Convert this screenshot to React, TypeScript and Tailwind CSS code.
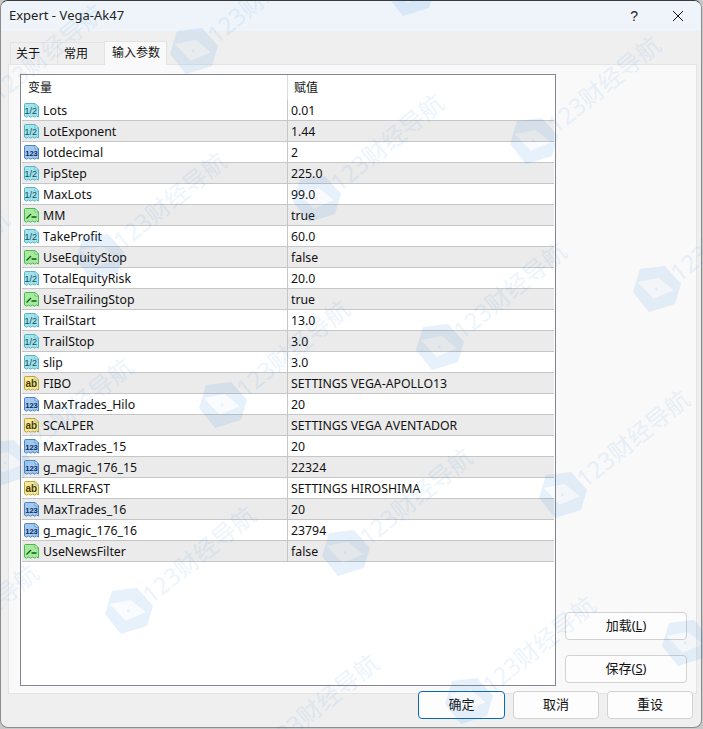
const rows: [string, string, string][] = [
  ['f', 'Lots', '0.01'],
  ['f', 'LotExponent', '1.44'],
  ['i', 'lotdecimal', '2'],
  ['f', 'PipStep', '225.0'],
  ['f', 'MaxLots', '99.0'],
  ['b', 'MM', 'true'],
  ['f', 'TakeProfit', '60.0'],
  ['b', 'UseEquityStop', 'false'],
  ['f', 'TotalEquityRisk', '20.0'],
  ['b', 'UseTrailingStop', 'true'],
  ['f', 'TrailStart', '13.0'],
  ['f', 'TrailStop', '3.0'],
  ['f', 'slip', '3.0'],
  ['s', 'FIBO', 'SETTINGS VEGA-APOLLO13'],
  ['i', 'MaxTrades_Hilo', '20'],
  ['s', 'SCALPER', 'SETTINGS VEGA AVENTADOR'],
  ['i', 'MaxTrades_15', '20'],
  ['i', 'g_magic_176_15', '22324'],
  ['s', 'KILLERFAST', 'SETTINGS HIROSHIMA'],
  ['i', 'MaxTrades_16', '20'],
  ['i', 'g_magic_176_16', '23794'],
  ['b', 'UseNewsFilter', 'false'],
];

const iconStyles: Record<string, { fill: string; stroke: string; ink: string }> = {
  f: { fill: '#a2e3ec', stroke: '#55b6c8', ink: '#0f4a5a' },
  i: { fill: '#a3c8f0', stroke: '#4a86c6', ink: '#0b2a5c' },
  b: { fill: '#a6ea9c', stroke: '#4fb658', ink: '#0f5a1c' },
  s: { fill: '#f5ea9c', stroke: '#bda640', ink: '#463a05' },
};

function TypeIcon({ kind }: { kind: string }) {
  const c = iconStyles[kind];
  return (
    <svg width="17" height="17" viewBox="0 0 17 17" className="shrink-0">
      <path
        d="M1.5 2.5a1 1 0 0 1 1-1H12l3.5 3.5v10l-2-1-1.7 1.2-2-1.2-2.3 1.2-2-1.2-2 1.2-2-1.2z"
        fill={c.fill}
        stroke={c.stroke}
        strokeWidth="1"
      />
      <path d="M12 1.5V5h3.5z" fill="#f4fbfd" stroke={c.stroke} strokeWidth="0.8" />
      {kind === 'f' && (
        <text x="7.8" y="11.5" textAnchor="middle" fontSize="9" fill={c.ink} fontFamily="Liberation Sans, sans-serif">1/2</text>
      )}
      {kind === 'i' && (
        <text x="8.5" y="11.8" textAnchor="middle" fontSize="7.6" fontWeight="700" fill={c.ink} fontFamily="Liberation Sans, sans-serif">123</text>
      )}
      {kind === 's' && (
        <text x="8.3" y="12" textAnchor="middle" fontSize="10" fontWeight="700" fill={c.ink} fontFamily="Liberation Sans, sans-serif">ab</text>
      )}
      {kind === 'b' && (
        <path d="M3.5 11.5l4.5-4.5M8.5 10H13.5" fill="none" stroke={c.ink} strokeWidth="1.3" />
      )}
    </svg>
  );
}

const marks: [number, number][] = [
  [-23, 109],
  [194, 51],
  [411, -7],
  [-117, 315],
  [100, 257],
  [317, 199],
  [534, 141],
  [6, 463],
  [223, 405],
  [440, 347],
  [657, 289],
  [-88, 669],
  [129, 611],
  [346, 553],
  [563, 495],
  [252, 759],
  [469, 701],
  [686, 643],
];

function Watermark({ x, y }: { x: number; y: number }) {
  return (
    <div className="absolute flex items-center origin-[24px_50%] rotate-[-39deg] opacity-[0.1]" style={{ left: x - 24, top: y - 23 }}>
      <svg width="48" height="46" viewBox="0 0 48 46" className="shrink-0 rotate-[39deg]">
        <path fillRule="evenodd" d="M7 3L32 0L48 17.7L42 38L16 46L0 26zM4.7 16L20.7 32.7L40.7 24.3L25.7 12z" fill="#1f7fe8" />
        <path d="M4.7 16L20.7 32.7L40.7 24.3L25.7 12z" fill="#1f7fe8" opacity="0.25" />
        <circle cx="23.3" cy="22.7" r="1.5" fill="#1f7fe8" />
      </svg>
      <span className="-ml-[3px] text-[24px] leading-none whitespace-nowrap text-[#1f7fe8] opacity-80 font-['Noto_Sans','Noto_Sans_CJK_SC',sans-serif]">123财经导航</span>
    </div>
  );
}

function Btn({ label, primary, className }: { label: React.ReactNode; primary?: boolean; className?: string }) {
  return (
    <button
      className={`h-[28px] shrink-0 flex items-center justify-center rounded-[4px] bg-[#fdfdfd] text-[13px] text-[#111] border ${primary ? 'border-[#0a67b8]' : 'border-[#d2d2d2]'} ${className ?? ''}`}
    >
      {label}
    </button>
  );
}

export default function App() {
  return (
    <div className="relative w-[703px] h-[729px] overflow-hidden bg-[#c9c9c9] font-['Noto_Sans','Noto_Sans_CJK_SC',sans-serif] [font-kerning:none]">
      <div className="flex flex-col w-[702px] h-[728px] rounded-[8px] overflow-hidden border border-[#8c8c8c] border-t-[#3a3a3a] bg-[#efefef]">
        <div className="h-[30px] shrink-0 flex items-center pl-[8px] bg-[#eef4fa] text-[13px] text-[#222]">
          <span>Expert - Vega-Ak47</span>
          <span className="ml-auto mr-[34px] text-[14px] font-['Liberation_Sans',sans-serif]">?</span>
          <svg width="12" height="12" viewBox="0 0 12 12" className="mr-[17px]">
            <path d="M1 1l10 10M11 1L1 11" stroke="#111" strokeWidth="1" fill="none" />
          </svg>
        </div>

        <div className="flex-1 flex flex-col pl-[7px]">
          <div className="flex items-end h-[33px] pl-[2px] shrink-0 text-[12px] text-[#111]">
            <div className="h-[22px] w-[47px] pl-[5px] flex items-center border-t border-l border-[#e3e3e3]">关于</div>
            <div className="h-[22px] w-[47px] pl-[6px] flex items-center border-t border-l border-[#e3e3e3]">常用</div>
            <div className="h-[24px] w-[63px] pl-[7px] pb-[2px] flex items-center border border-b-0 border-[#e3e3e3] bg-[#f9f9f9] relative z-10 -mb-px">输入参数</div>
          </div>

          <div className="h-[630px] w-[689px] shrink-0 flex bg-[#f9f9f9] border border-[#e4e4e4] pl-[11px] pt-[9px]">
            <div className="w-[536px] h-[612px] shrink-0 bg-white border border-[#85858f] px-px text-[12.3px] text-[#111]">
              <div className="h-[25px] flex items-center">
                <div className="w-[265px] pl-[6px] h-full flex items-center text-[12px]">变量</div>
                <div className="flex-1 h-full border-l border-[#dcdcdc] pl-[6px] flex items-center text-[12px]">赋值</div>
              </div>
              {rows.map(([k, name, value], i) => (
                <div key={name} className={`h-[21px] flex items-center border-b border-[#c6c6c6] ${i % 2 === 1 ? 'bg-[#ebebeb]' : 'bg-white'}`}>
                  <div className="w-[265px] h-full flex items-center pl-px gap-[3px]">
                    <TypeIcon kind={k} />
                    <span className="relative top-px">{name}</span>
                  </div>
                  <div className="flex-1 h-full border-l border-[#c6c6c6] pl-[3px] flex items-center">
                    <span className="relative top-px">{value}</span>
                  </div>
                </div>
              ))}
            </div>
            <div className="flex flex-col ml-[9px] pt-[538px] gap-[15px]">
              <Btn className="w-[122px]" label={<span>加载(<u>L</u>)</span>} />
              <Btn className="w-[122px]" label={<span>保存(<u>S</u>)</span>} />
            </div>
          </div>

          <div className="flex justify-end -mt-[3px] pr-[8px]">
            <Btn className="w-[87px] border-[1.5px]" primary label="确定" />
            <Btn className="w-[86px] ml-[8px]" label="取消" />
            <Btn className="w-[86px] ml-[8px]" label="重设" />
          </div>
        </div>
      </div>

      <div className="absolute inset-0 pointer-events-none overflow-hidden">
        {marks.map(([x, y]) => (
          <Watermark key={`${x}-${y}`} x={x} y={y} />
        ))}
      </div>
    </div>
  );
}
